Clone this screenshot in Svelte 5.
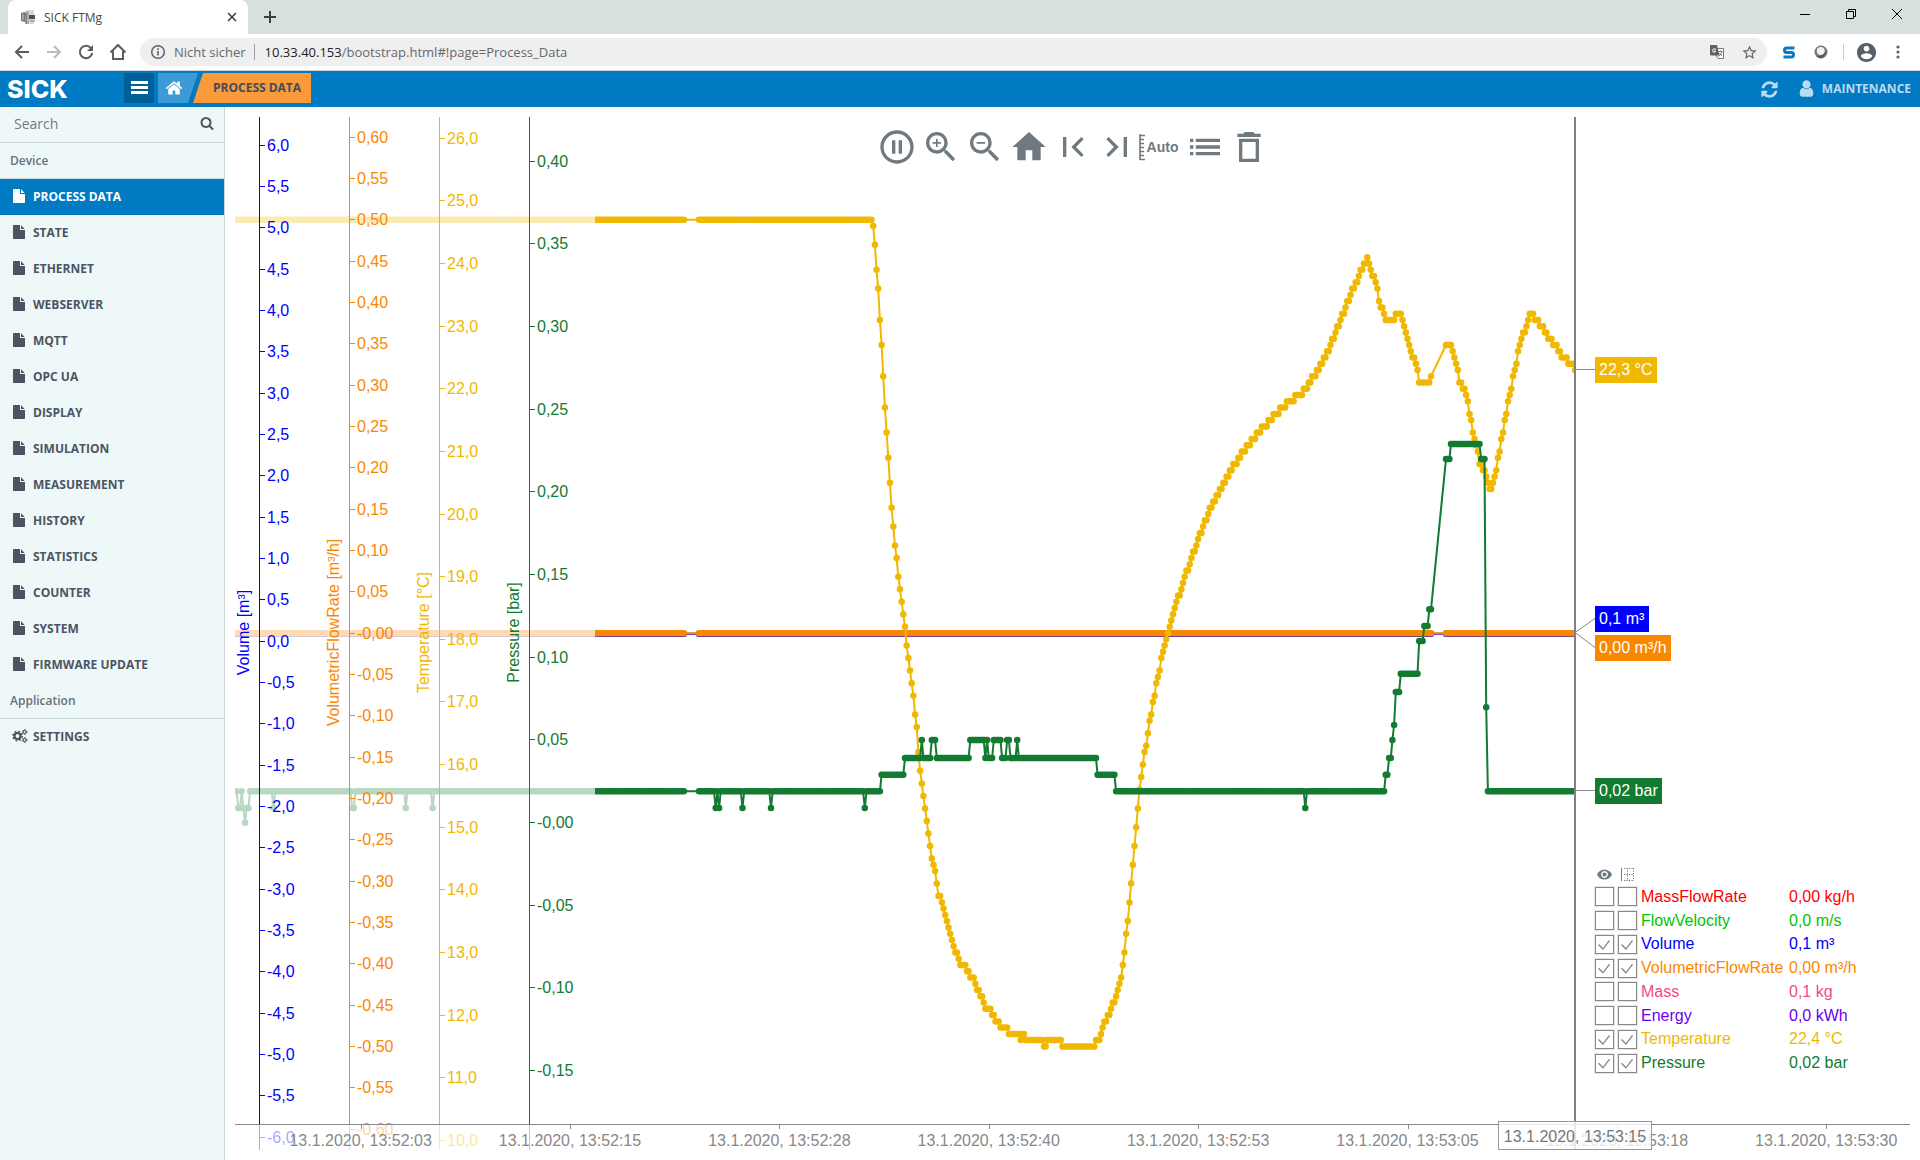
<script>
  const navItems = [
    'PROCESS DATA', 'STATE', 'ETHERNET', 'WEBSERVER', 'MQTT', 'OPC UA', 'DISPLAY',
    'SIMULATION', 'MEASUREMENT', 'HISTORY', 'STATISTICS', 'COUNTER', 'SYSTEM', 'FIRMWARE UPDATE'
  ];

  const BLUE = '#0000ff';
  const ORANGE = '#fa8700';
  const YELLOW = '#f0b800';
  const GREEN = '#127a31';

  let legend = $state([
    { name: 'MassFlowRate', value: '0,00 kg/h', color: '#ff0000', shown: false, axis: false },
    { name: 'FlowVelocity', value: '0,0 m/s', color: '#00c400', shown: false, axis: false },
    { name: 'Volume', value: '0,1 m³', color: BLUE, shown: true, axis: true },
    { name: 'VolumetricFlowRate', value: '0,00 m³/h', color: ORANGE, shown: true, axis: true },
    { name: 'Mass', value: '0,1 kg', color: '#f04a86', shown: false, axis: false },
    { name: 'Energy', value: '0,0 kWh', color: '#6a00f0', shown: false, axis: false },
    { name: 'Temperature', value: '22,4 °C', color: YELLOW, shown: true, axis: true },
    { name: 'Pressure', value: '0,02 bar', color: GREEN, shown: true, axis: true }
  ]);

  // Chart geometry: the plot follows the size of its container.
  let width = $state(1695);
  let height = $state(1053);
  const left = 10;
  const top = 10;
  const plotW = $derived(width - 20);
  const bottom = $derived(height - 36);
  const plotH = $derived(bottom - top);
  const cursorX = $derived(left + plotW * 0.8);
  const axisZone = 360;

  // Time: 1000 samples of 0.1 s across the plot.
  const px = (i) => left + (i / 1000) * plotW;
  const py = (axis, v) => top + ((axis.max - v) / axis.span) * plotH;

  const axes = [
    { title: 'Volume [m³]', color: BLUE, max: 6.342, span: 12.181, from: 6, step: 0.5, count: 25, digits: 1 },
    { title: 'VolumetricFlowRate [m³/h]', color: ORANGE, max: 0.6245, span: 1.2181, from: 0.6, step: 0.05, count: 25, digits: 2 },
    { title: 'Temperature [°C]', color: YELLOW, max: 26.34, span: 16.079, from: 26, step: 1, count: 17, digits: 1 },
    { title: 'Pressure [bar]', color: GREEN, max: 0.4268, span: 0.6093, from: 0.4, step: 0.05, count: 12, digits: 2 }
  ];

  // Two-digit axes write their zero with a minus sign.
  const ticksOf = (axis) =>
    Array.from({ length: axis.count }, (_, k) => {
      const v = axis.from - k * axis.step;
      const text = Math.abs(v).toFixed(axis.digits).replace('.', ',');
      const negative = v < -1e-9 || (Math.abs(v) < 1e-9 && axis.digits === 2);
      return { v, label: (negative ? '-' : '') + text };
    });

  const timeTicks = ['13:52:03', '13:52:15', '13:52:28', '13:52:40', '13:52:53', '13:53:05', '13:53:18', '13:53:30'];

  // "value" or "valuexcount" runs, one sample each, starting at a sample index.
  function expand(start, text, scale) {
    const out = [];
    let i = start;
    for (const run of text.trim().split(/\s+/)) {
      const [v, n] = run.split('x');
      for (let k = 0; k < Number(n ?? 1); k++) out.push([i++, Number(v) * scale]);
    }
    return out;
  }

  const temperature = [
    ...expand(0, '247x269', 0.1),
    ...expand(277, '247x104 246 243 239 236 231 227 222 217 213 209 205 201 198 195 193 190 188 186 184 182 179 177 175 173 171 168 166 162 159 157 155 153 151 149 147 145 144 143 141 139x2 138 137 136 135 134 133 132 131 130x2 129 128x4 127x2 126x3 125 124x2 123x2 122 121x4 120x2 119x3 118x5 117x7 116 117x2 116x11 115x2 116x9 115x20 116x3 117 118 119x2 120x2 121 122x2 123 124 125 126 128 130 133 135 138 141 144 147 150 153 156 158 160 162 163 165 167 168 170 171 173 174 175 177 178 179 180 181 182 183 184 185 186 187x2 188 189 190 191x2 192 193 194x2 195 196 197x2 198 199x2 200 201x2 202x2 203x2 204x2 205x2 206x2 207x2 208x3 209x2 210x3 211x3 212x3 213x3 214x4 215x3 216x4 217x4 218x5 219x5 220x3 221x2 222x3 223x2 224x2 225x2 226x2 227 228x2 229 230x2 231 232x2 233 234x2 235 236x2 237x2 238 239x2 240x2 241 240 239 238x2 237 236 234 233x2 232 231x6 232x4 231 230 229 228 227 226 225x2 224 223 221x7 222', 0.1),
    ...expand(723, '227x4 226 225 224 223 221x2 220x2 219 218 216 215 213 212 211 210 208x2 207x2 206 205 204x2 205 206 207 209 210 212 213 215 216 218 219 220 222 223 224 226 227 228 229x2 230 231 232x3 231x3 230x3 229x2 228x3 227x3 226x2 225x4 224x4 223', 0.1)
  ];

  const pressure = [
    ...expand(0, '188x2 87x2 188 87 -2 87x2 188x14 87 188x46 87x2 188x30 87 188x15 87 188x150', 0.0001),
    ...expand(277, '188x10 87 188 87 188x13 87 188x16 87 188x55 87 188x9 288x14 389x10 498 389x5 498x3 389x20 498x9 389 498 389x3 498x5 389x3 498x2 389x4 498 389x47 288x11 188x113 87 188x47 288x2 389x2 498 589 789x3 899x11 1097x3 1188x3 1289x2', 0.0001),
    ...expand(723, '2198x3 2289x18 2198x3 697 188x53', 0.0001)
  ];

  const flat = (v) => [
    ...expand(0, `${v}x269`, 1),
    ...expand(277, `${v}x438`, 1),
    ...expand(723, `${v}x78`, 1)
  ];

  const series = [
    { axis: axes[0], points: flat(0.092) },
    { axis: axes[1], points: flat(0) },
    { axis: axes[2], points: temperature },
    { axis: axes[3], points: pressure }
  ];

  const linePath = (s) =>
    'M' + s.points.map(([i, v]) => `${px(i).toFixed(1)} ${py(s.axis, v).toFixed(1)}`).join('L');
  const dotPath = (s) =>
    s.points.map(([i, v]) => `M${px(i).toFixed(1)} ${py(s.axis, v).toFixed(1)}h0`).join('');

  const tags = [
    { text: '22,3 °C', axis: axes[2], v: 22.3, shift: 0, w: 62 },
    { text: '0,1 m³', axis: axes[0], v: 0.1, shift: -14, w: 54 },
    { text: '0,00 m³/h', axis: axes[1], v: 0, shift: 15, w: 76 },
    { text: '0,02 bar', axis: axes[3], v: 0.0188, shift: 0, w: 67 }
  ];

  const filePath = 'M1152 512v-472q22 14 36 28l408 408q14 14 28 36h-472zm-128 32q0 40 28 68t68 28h544v1056q0 40-28 68t-68 28h-1344q-40 0-68-28t-28-68v-1600q0-40 28-68t68-28h800v544z';
  const homePath = 'M1472 992v480q0 26-19 45t-45 19h-384v-384h-256v384h-384q-26 0-45-19t-19-45v-480q0-1 .5-3t.5-3l575-474 575 474q1 2 1 6zm223-69l-62 74q-8 9-21 11h-3q-13 0-21-7l-692-577-692 577q-12 8-24 7-13-2-21-11l-62-74q-8-10-7-23.5t11-21.5l719-599q32-26 76-26t76 26l244 204v-195q0-14 9-23t23-9h192q14 0 23 9t9 23v408l219 182q10 8 11 21.5t-7 23.5z';
  const searchPath = 'M1216 832q0-185-131.5-316.5t-316.5-131.5-316.5 131.5-131.5 316.5 131.5 316.5 316.5 131.5 316.5-131.5 131.5-316.5zm512 832q0 52-38 90t-90 38q-54 0-90-38l-343-342q-179 124-399 124-143 0-273.5-55.5t-225-150-150-225-55.5-273.5 55.5-273.5 150-225 225-150 273.5-55.5 273.5 55.5 225 150 150 225 55.5 273.5q0 220-124 399l343 343q37 37 37 90z';
  const refreshPath = 'M1639 1056q0 5-1 7-64 268-268 434.5t-478 166.5q-146 0-282.5-55t-243.5-157l-129 129q-19 19-45 19t-45-19-19-45v-448q0-26 19-45t45-19h448q26 0 45 19t19 45-19 45l-137 137q71 66 161 102t187 36q134 0 250-65t186-179q11-17 53-117 8-23 30-23h192q13 0 22.5 9.5t9.5 22.5zm25-800v448q0 26-19 45t-45 19h-448q-26 0-45-19t-19-45 19-45l138-138q-148-137-349-137-134 0-250 65t-186 179q-11 17-53 117-8 23-30 23h-199q-13 0-22.5-9.5t-9.5-22.5v-7q65-268 270-434.5t480-166.5q146 0 284 55.5t245 156.5l130-129q19-19 45-19t45 19 19 45z';
  const userPath = 'M1536 1399q0 109-62.5 187t-150.5 78h-854q-88 0-150.5-78t-62.5-187q0-85 8.5-160.5t31.5-152 58.5-131 94-89 134.5-34.5q131 128 313 128t313-128q76 0 134.5 34.5t94 89 58.5 131 31.5 152 8.5 160.5zm-256-887q0 159-112.5 271.5t-271.5 112.5-271.5-112.5-112.5-271.5 112.5-271.5 271.5-112.5 271.5 112.5 112.5 271.5z';

  const tools = [
    { label: 'Pause', d: 'M9 16h2V8H9v8zm3-14C6.48 2 2 6.48 2 12s4.480 10 10 10 10-4.480 10-10S17.520 2 12 2zm0 18c-4.410 0-8-3.590-8-8s3.590-8 8-8 8 3.590 8 8-3.590 8-8 8zm1-4h2V8h-2v8z' },
    { label: 'Zoom in', d: 'M15.500 14h-.790l-.280-.270C15.410 12.590 16 11.110 16 9.500 16 5.910 13.090 3 9.500 3S3 5.910 3 9.500 5.910 16 9.500 16c1.610 0 3.090-.590 4.230-1.570l.270.280v.790l5 4.990L20.490 19l-4.990-5zm-6 0C7.010 14 5 11.990 5 9.500S7.010 5 9.500 5 14 7.010 14 9.500 11.990 14 9.500 14zM12 10h-2v2H9v-2H7V9h2V7h1v2h2v1z' },
    { label: 'Zoom out', d: 'M15.500 14h-.790l-.280-.270C15.410 12.590 16 11.110 16 9.500 16 5.910 13.090 3 9.500 3S3 5.910 3 9.500 5.910 16 9.500 16c1.610 0 3.090-.590 4.230-1.570l.270.280v.790l5 4.990L20.490 19l-4.990-5zm-6 0C7.010 14 5 11.990 5 9.500S7.010 5 9.500 5 14 7.010 14 9.500 11.990 14 9.500 14zM7 9h5v1H7z' },
    { label: 'Reset view', d: 'M10 20v-6h4v6h5v-8h3L12 3 2 12h3v8z' },
    { label: 'Go to start', d: 'M18.410 16.590L13.820 12l4.590-4.590L17 6l-6 6 6 6zM6 6h2v12H6z' },
    { label: 'Go to end', d: 'M5.590 7.410L10.180 12l-4.590 4.590L7 18l6-6-6-6zM16 6h2v12h-2z' },
    { label: 'Auto', d: '' },
    { label: 'Legend', d: 'M3 13h2v-2H3v2zm0 4h2v-2H3v2zm0-8h2V7H3v2zm3.500 4H21v-2H6.500v2zm0 4H21v-2H6.500v2zM6.500 7v2H21V7H6.500z' },
    { label: 'Clear', d: 'M6 21h12V7H6v14zM8 9h8v10H8V9zm7.500-5l-1-1h-5l-1 1H5v2h14V4z' }
  ];
</script>

<div class="window">
  <div class="tabstrip">
    <div class="tab">
      <svg class="favicon" viewBox="0 0 16 16" width="16" height="16">
        <path d="M1 4l4-1v10l-4-1z" fill="#777" />
        <path d="M2 6h2M2 8h2M2 10h2" stroke="#ccc" stroke-width="1" />
        <path d="M5 4c1-3 3-3 4-1v12H6z" fill="#a9adb0" />
        <path d="M6 4v11" stroke="#555" stroke-width="1" />
        <rect x="9" y="1" width="5" height="14" rx="1" fill="#d5d8da" />
        <rect x="9" y="6" width="6" height="4" fill="#4d5357" />
        <path d="M10 12h5" stroke="#777" />
      </svg>
      <span class="tab-title">SICK FTMg</span>
      <button class="plain tab-close" aria-label="Close tab">
        <svg viewBox="0 0 10 10" width="10" height="10"><path d="M1 1l8 8M9 1l-8 8" stroke="#3c4043" stroke-width="1.600" /></svg>
      </button>
    </div>
    <button class="plain new-tab" aria-label="New tab">
      <svg viewBox="0 0 12 12" width="12" height="12"><path d="M6 0v12M0 6h12" stroke="#3c4043" stroke-width="2" /></svg>
    </button>
    <div class="spacer"></div>
    <div class="controls">
      <button class="plain" aria-label="Minimize"><svg viewBox="0 0 10 10" width="10" height="10"><path d="M0 5.500h10" stroke="#000" /></svg></button>
      <button class="plain" aria-label="Restore"><svg viewBox="0 0 10 10" width="10" height="10"><path d="M.5 2.500h7v7h-7zM2.500 2.500v-2h7v7h-2" stroke="#000" fill="none" /></svg></button>
      <button class="plain" aria-label="Close"><svg viewBox="0 0 10 10" width="10" height="10"><path d="M0 0l10 10M10 0l-10 10" stroke="#000" /></svg></button>
    </div>
  </div>

  <div class="browserbar">
    <button class="plain tool" aria-label="Back"><svg viewBox="0 0 16 16" width="16" height="16"><path d="M15 8H2M8 2L2 8l6 6" fill="none" stroke="#5a5e62" stroke-width="2" /></svg></button>
    <button class="plain tool" aria-label="Forward"><svg viewBox="0 0 16 16" width="16" height="16"><path d="M1 8h13M8 2l6 6-6 6" fill="none" stroke="#b9bbbd" stroke-width="2" /></svg></button>
    <button class="plain tool" aria-label="Reload"><svg viewBox="0 0 16 16" width="16" height="16"><path d="M13 4.200A6.200 6.200 0 1 0 14.200 9" fill="none" stroke="#5a5e62" stroke-width="2" /><path d="M15 1v6H9z" fill="#5a5e62" /></svg></button>
    <button class="plain tool" aria-label="Home"><svg viewBox="0 0 18 18" width="18" height="18"><path d="M1.500 9.500L9 2l7.500 7.500M4 8v8h10V8" fill="none" stroke="#5a5e62" stroke-width="2" /></svg></button>
    <div class="omnibox">
      <svg viewBox="0 0 16 16" width="16" height="16"><circle cx="8" cy="8" r="6.300" fill="none" stroke="#5f6368" stroke-width="1.500" /><path d="M8 7v4.500M8 4.300v1.600" stroke="#5f6368" stroke-width="1.600" /></svg>
      <span class="security">Nicht sicher</span>
      <span class="bar"></span>
      <span class="url"><b>10.33.40.153</b>/bootstrap.html#!page=Process_Data</span>
      <button class="plain tool" aria-label="Translate">
        <svg viewBox="0 0 14 14" width="14" height="14"><path d="M6 3.500h7.500v10H8L6 10" fill="#fff" stroke="#777" /><path d="M0 0h7l2.500 10.500H1L0 9.500z" fill="#5f6368" /><path d="M6 4H4a1.600 1.600 0 1 0 1.600 2H4" stroke="#fff" fill="none" /><path d="M8.500 6.500h4M10.500 5.500v1M12 7l-3 4.500M9.500 8l2.500 3" stroke="#777" fill="none" /></svg>
      </button>
      <button class="plain tool" aria-label="Bookmark">
        <svg viewBox="0 0 24 24" width="17" height="17"><path fill="#5f6368" d="M22 9.240l-7.190-.620L12 2 9.190 8.630 2 9.240l5.460 4.730L5.820 21 12 17.270 18.180 21l-1.630-7.030L22 9.240zM12 15.400l-3.760 2.270 1-4.280-3.320-2.880 4.380-.380L12 6.100l1.710 4.040 4.380.380-3.320 2.880 1 4.280L12 15.400z" /></svg>
      </button>
    </div>
    <button class="plain tool" aria-label="S extension">
      <svg viewBox="0 0 12 13" width="12" height="13"><path d="M11.500 2H3.500Q1.500 2 1.500 4.200T3.500 6.500H8.500Q10.500 6.500 10.500 8.800T8.500 11H.5" fill="none" stroke="#0b7cc4" stroke-width="3" /></svg>
    </button>
    <button class="plain tool" aria-label="Extension">
      <svg viewBox="0 0 14 14" width="14" height="14"><circle cx="7" cy="7" r="6.500" fill="#777" /><circle cx="6.800" cy="6" r="4" fill="#f1f1f1" /><path d="M2 11c4 1 8-1 10-6-1 6-3 8-6 8z" fill="#555" /></svg>
    </button>
    <span class="divider"></span>
    <button class="plain tool" aria-label="Profile">
      <svg viewBox="2 2 20 20" width="19" height="19"><path fill="#56606a" d="M12 2C6.480 2 2 6.480 2 12s4.480 10 10 10 10-4.480 10-10S17.520 2 12 2zm0 3c1.660 0 3 1.340 3 3s-1.340 3-3 3-3-1.340-3-3 1.340-3 3-3zm0 14.200c-2.500 0-4.710-1.280-6-3.220.030-1.990 4-3.080 6-3.080 1.990 0 5.970 1.090 6 3.080-1.290 1.940-3.500 3.220-6 3.220z" /></svg>
    </button>
    <button class="plain tool" aria-label="Browser menu">
      <svg viewBox="0 0 4 14" width="4" height="14"><circle cx="2" cy="2" r="1.600" fill="#5f6368" /><circle cx="2" cy="7" r="1.600" fill="#5f6368" /><circle cx="2" cy="12" r="1.600" fill="#5f6368" /></svg>
    </button>
  </div>

  <header>
    <span class="logo">SICK</span>
    <nav class="crumbs" aria-label="Breadcrumb">
      <button class="plain menu" aria-label="Menu"><svg viewBox="0 0 17 14" width="17" height="14"><path d="M0 1.500h17M0 6.500h17M0 11.500h17" stroke="#fff" stroke-width="3" /></svg></button>
      <a class="home" href="#home" aria-label="Home"><svg viewBox="0 0 1792 1792" width="18" height="18"><path fill="#fff" d={homePath} /></svg></a>
      <a class="current" href="#process-data">PROCESS DATA</a>
    </nav>
    <div class="spacer"></div>
    <button class="plain refresh" aria-label="Refresh"><svg viewBox="0 0 1792 1792" width="19" height="19"><path fill="#b9dcf2" d={refreshPath} /></svg></button>
    <button class="plain user"><svg viewBox="0 0 1792 1792" width="19" height="19"><path fill="#b9dcf2" d={userPath} /></svg>MAINTENANCE</button>
  </header>

  <div class="content">
    <aside>
      <div class="search">
        <input type="text" placeholder="Search" aria-label="Search" />
        <svg viewBox="0 0 1792 1792" width="14" height="14"><path fill="#4b5563" d={searchPath} /></svg>
      </div>
      <h2>Device</h2>
      <nav aria-label="Device">
        {#each navItems as item, i}
          <a href="#{item}" class:active={i === 0}>
            <svg viewBox="0 0 1792 1792" width="14" height="14"><path fill="currentColor" d={filePath} /></svg>
            {item}
          </a>
        {/each}
      </nav>
      <h2>Application</h2>
      <nav aria-label="Application">
        <a href="#settings">
          <svg class="cogs" viewBox="0 0 16 14" width="16" height="14" fill="none" stroke="currentColor">
            <circle cx="5.500" cy="7" r="3" stroke-width="2.200" />
            <circle cx="5.500" cy="7" r="4.600" stroke-width="1.600" stroke-dasharray="1.810 1.810" />
            <circle cx="12.600" cy="3" r="1.500" stroke-width="1.200" />
            <circle cx="12.600" cy="3" r="2.400" stroke-width="1" stroke-dasharray="1.250 1.250" />
            <circle cx="12.600" cy="11" r="1.500" stroke-width="1.200" />
            <circle cx="12.600" cy="11" r="2.400" stroke-width="1" stroke-dasharray="1.250 1.250" />
          </svg>
          SETTINGS
        </a>
      </nav>
    </aside>

    <main bind:clientWidth={width} bind:clientHeight={height}>
      <svg class="chart" role="img" aria-label="Process data over time">
        <defs>
          <clipPath id="plot"><rect x={left} y={top} width={cursorX - left} height={plotH} /></clipPath>
        </defs>

        <g clip-path="url(#plot)" fill="none">
          {#each series as s}
            <path d={linePath(s)} stroke={s.axis.color} stroke-width="2" stroke-linejoin="round" />
            <path d={dotPath(s)} stroke={s.axis.color} stroke-width="6.500" stroke-linecap="round" />
          {/each}
          <rect x="0" y="0" width={left + axisZone} height={bottom} fill="#fff" fill-opacity="0.7" />
        </g>

        {#each axes as axis, a}
          <g fill={axis.color} stroke="none">
            <rect x={left + 24 + a * 90} y={top} width="1" height={plotH + 26} />
            {#each ticksOf(axis) as tick}
              <rect x={left + 25 + a * 90} y={Math.round(py(axis, tick.v) - 0.5)} width="5" height="1" />
              <text x={left + 32 + a * 90} y={Math.round(py(axis, tick.v) + 5.5)}>{tick.label}</text>
            {/each}
            <text text-anchor="middle" transform="translate({left + 14 + a * 90} {top + plotH / 2 + 12}) rotate(-90)">{axis.title}</text>
          </g>
        {/each}

        <rect x="0" y={bottom} {width} height="36" fill="#fff" fill-opacity="0.65" />
        <rect x={left} y={bottom} width={plotW} height="1" fill="#888" />
        {#each timeTicks as time, k}
          <rect x={Math.round(px(75 + k * 125))} y={bottom} width="1" height="5" fill="#888" />
          <text class="time" text-anchor="middle" x={px(75 + k * 125)} y={bottom + 22}>13.1.2020, {time}</text>
        {/each}

        <rect x={cursorX - 1} y={top} width="2" height={plotH + 26} fill="#808080" />
        {#each tags as tag}
          {@const y = Math.round(py(tag.axis, tag.v))}
          <path d="M{cursorX} {y - 0.5}L{cursorX + 20} {y + tag.shift - 0.5}" stroke="#888" />
          <rect x={cursorX + 20} y={y + tag.shift - 13} width={tag.w} height="26" fill={tag.axis.color} />
          <text x={cursorX + 24} y={y + tag.shift + 5} fill="#fff">{tag.text}</text>
        {/each}
        <rect x={cursorX - 76.5} y={bottom - 2.5} width="153" height="28" fill="#fff" fill-opacity="0.8" stroke="#999" />
        <text class="stamp" text-anchor="middle" x={cursorX} y={bottom + 18}>13.1.2020, 13:53:15</text>
      </svg>

      <div class="tools" role="toolbar" aria-label="Chart tools">
        {#each tools as t}
          <button class="plain" class:auto={!t.d} aria-label={t.label}>
            {#if t.d}
              <svg viewBox="0 0 24 24" width="40" height="40"><path fill="currentColor" d={t.d} /></svg>
            {:else}
              <svg viewBox="0 0 6 28" width="6" height="28"><path d="M1 1v26M1 2.500h5M1 6.500h4M1 10.500h4M1 14.500h4M1 18.500h4M1 22.500h4M1 26.500h5" stroke="currentColor" fill="none" stroke-width="1.600" /></svg><span>Auto</span>
            {/if}
          </button>
        {/each}
      </div>

      <div class="legend" style:left="{cursorX + 19}px">
        <div class="legend-head">
          <svg viewBox="1 4 22 16" width="15" height="11"><path fill="#6f7980" d="M12 4.500C7 4.500 2.730 7.610 1 12c1.730 4.390 6 7.500 11 7.500s9.270-3.110 11-7.500c-1.730-4.390-6-7.500-11-7.500zM12 17c-2.760 0-5-2.240-5-5s2.240-5 5-5 5 2.240 5 5-2.240 5-5 5zm0-8c-1.660 0-3 1.340-3 3s1.340 3 3 3 3-1.340 3-3-1.340-3-3-3z" /></svg>
          <svg viewBox="0 0 13 13" width="13" height="13" fill="none" stroke="#777"><path d="M.5 0v13" /><path d="M3 .5h10M3 6.500h10M3 12.500h10M6.500 0v13M12.500 0v13" stroke-dasharray="1.200 1.300" /></svg>
        </div>
        <div class="legend-rows">
          {#each legend as row, i}
            <div class="row">
              <input type="checkbox" id="show-{i}" bind:checked={row.shown} />
              <input type="checkbox" aria-label="{row.name} axis" bind:checked={row.axis} />
              <label for="show-{i}" style:color={row.color}>{row.name}</label>
              <output style:color={row.color}>{row.value}</output>
            </div>
          {/each}
        </div>
      </div>
    </main>
  </div>
</div>

<style>
  :global(body) {
    margin: 0;
    background: #fff;
  }
  .window {
    display: flex;
    flex-direction: column;
    height: 100vh;
    overflow: hidden;
    font-family: 'Open Sans', 'Noto Sans', sans-serif;
    font-size: 13px;
    color: #4b5563;
  }
  .plain {
    display: flex;
    align-items: center;
    justify-content: center;
    padding: 0;
    border: 0;
    background: none;
    color: inherit;
    font: inherit;
  }
  .spacer {
    flex: 1;
  }
  svg {
    flex: none;
  }

  .tabstrip {
    display: flex;
    flex: none;
    height: 34px;
    padding-left: 8px;
    background: #d8e0df;
  }
  .tab {
    display: flex;
    align-items: center;
    gap: 8px;
    width: 220px;
    padding: 0 8px 0 12px;
    border-radius: 8px 8px 0 0;
    background: #fff;
    color: #45494d;
    font-size: 12px;
  }
  .tab-title {
    flex: 1;
  }
  .tab-close {
    width: 16px;
    height: 16px;
  }
  .new-tab {
    width: 28px;
    margin-left: 8px;
  }
  .controls {
    display: flex;
    height: 28px;
  }
  .controls button {
    width: 46px;
  }

  .browserbar {
    display: flex;
    flex: none;
    align-items: center;
    height: 36px;
    padding: 0 6px;
    border-bottom: 1px solid #cfd8d8;
    background: #fff;
  }
  .tool {
    flex: none;
    width: 32px;
    height: 28px;
  }
  .omnibox {
    display: flex;
    flex: 1;
    align-items: center;
    height: 28px;
    margin: 0 6px;
    padding: 0 2px 0 10px;
    border-radius: 14px;
    background: #efefef;
    color: #66696d;
  }
  .security {
    margin-left: 8px;
  }
  .bar {
    width: 1px;
    height: 16px;
    margin: 0 10px 0 8px;
    background: #9a9c9e;
  }
  .url {
    flex: 1;
  }
  .url b {
    color: #202124;
    font-weight: 400;
  }
  .divider {
    width: 1px;
    height: 16px;
    margin: 0 6px;
    background: #c9cbcd;
  }

  header {
    display: flex;
    flex: none;
    align-items: center;
    height: 36px;
    padding: 0 9px 0 7px;
    background: #007ac2;
    color: #b9dcf2;
  }
  .logo {
    width: 117px;
    color: #fff;
    font: 800 25px/36px Inter, sans-serif;
  }
  .crumbs {
    display: flex;
    height: 30px;
    margin-bottom: 2px;
  }
  .menu {
    width: 30px;
    margin-right: 4px;
    background: #005f96;
  }
  .home {
    display: flex;
    align-items: center;
    width: 28px;
    padding: 0 5px 0 7px;
    background: #3d9ad4;
    clip-path: polygon(0 0, 100% 0, calc(100% - 10px) 100%, 0 100%);
  }
  .current {
    margin-left: -5px;
    padding: 0 10px 0 20px;
    background: #fb9a3b;
    clip-path: polygon(10px 0, 100% 0, 100% 100%, 0 100%);
    color: #414c5a;
    font-size: 12px;
    font-weight: 700;
    line-height: 30px;
    text-decoration: none;
  }
  .refresh {
    margin-right: 18px;
  }
  .user {
    gap: 6px;
    padding-bottom: 2px;
    font-size: 12px;
    font-weight: 700;
  }

  .content {
    display: flex;
    flex: 1;
    min-height: 0;
  }
  aside {
    flex: none;
    width: 224px;
    border-right: 1px solid #c9d6d6;
    background: #eff8f8;
  }
  .search {
    display: flex;
    align-items: center;
    height: 33px;
    padding: 0 10px 2px 14px;
    border-bottom: 1px solid #c9d6d6;
  }
  .search svg {
    margin-bottom: 2px;
  }
  .search input {
    flex: 1;
    min-width: 0;
    padding: 0;
    border: 0;
    outline: 0;
    background: none;
    font: 14px/20px 'Open Sans', sans-serif;
  }
  .search input::placeholder {
    color: #737a80;
  }
  h2 {
    margin: 0;
    padding-left: 10px;
    border-bottom: 1px solid #c9d6d6;
    color: #66717a;
    font-size: 12px;
    font-weight: 600;
    line-height: 35px;
  }
  aside a {
    display: flex;
    align-items: center;
    gap: 7px;
    height: 34px;
    padding: 0 0 2px 12px;
    color: #4b5463;
    font-size: 12px;
    font-weight: 700;
    text-decoration: none;
  }
  aside a.active {
    background: #007ac2;
    color: #fff;
  }
  aside .cogs {
    margin-right: -2px;
  }

  main {
    position: relative;
    flex: 1;
    min-width: 0;
    overflow: hidden;
    font: 16px/20px 'Liberation Sans', Arial, sans-serif;
  }
  .chart {
    display: block;
    width: 100%;
    height: 100%;
  }
  .time {
    fill: #888;
  }
  .stamp {
    fill: #777;
  }
  .tools {
    position: absolute;
    top: 20px;
    left: 0;
    right: 0;
    display: flex;
    justify-content: center;
    gap: 4px;
    color: #6f7980;
  }
  .tools button {
    flex: none;
    width: 40px;
    height: 40px;
    gap: 2px;
    font-size: 14px;
    font-weight: 700;
  }
  .tools .auto {
    justify-content: flex-end;
    padding-right: 2px;
    box-sizing: border-box;
  }
  .legend {
    position: absolute;
    bottom: 85px;
  }
  .legend-head {
    display: flex;
    align-items: center;
    gap: 9px;
    height: 17px;
    padding: 0 3px 2px;
  }
  .legend-rows {
    display: grid;
    grid-auto-rows: 1fr;
    height: 190px;
  }
  .row {
    display: grid;
    grid-template-columns: 20px 20px 146px auto;
    column-gap: 3px;
    align-items: center;
  }
  .row label {
    padding-left: 1px;
  }
  .row input {
    position: relative;
    width: 19px;
    height: 19px;
    margin: 0 1px;
    border: 1px solid #888;
    box-shadow: 0 0 0 1px #e6e6e6;
    appearance: none;
    background: #fff;
  }
  .row input:checked::before {
    content: '';
    position: absolute;
    inset: 0;
    background: #888;
    clip-path: polygon(2px 9px, 3px 8px, 7px 12px, 13px 4px, 14px 5px, 7px 14px);
  }
</style>
